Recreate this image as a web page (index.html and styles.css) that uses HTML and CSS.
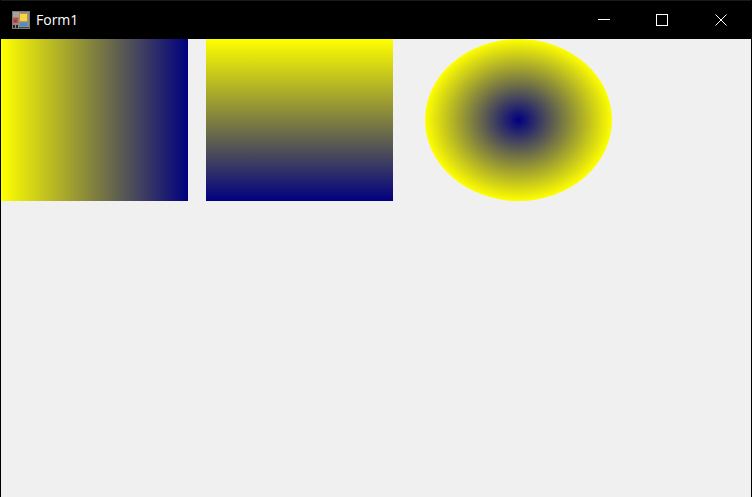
FILE: index.html
```html
<!DOCTYPE html>
<html lang="en">
<head>
<meta charset="utf-8">
<title>Form1</title>
<link rel="stylesheet" href="styles.css">
</head>
<body>
<div class="window">
  <header class="titlebar">
    <svg class="app-icon" width="18" height="18" viewBox="0 0 18 18" aria-hidden="true">
      <rect x="0" y="0" width="18" height="18" fill="#7a7a7a"/>
      <rect x="1" y="1" width="16" height="16" fill="#8f8b86"/>
      <rect x="1" y="1" width="6" height="5" fill="#a8a29a"/>
      <rect x="7" y="2" width="9" height="9" fill="#a89a5c"/>
      <rect x="8" y="3" width="7" height="7" fill="#fbd243"/>
      <rect x="1" y="7" width="5" height="5" fill="#c9493f"/>
      <rect x="2.500" y="9" width="2" height="2" fill="#8a3a34"/>
      <rect x="8" y="12" width="7" height="3" fill="#3f8fdc"/>
      <rect x="1" y="14" width="2" height="3" fill="#222"/>
      <rect x="4" y="14" width="2" height="3" fill="#222"/>
      <rect x="7" y="16" width="10" height="1" fill="#444"/>
    </svg>
    <span class="title">Form1</span>
    <div class="controls">
      <div class="control">
        <svg width="12" height="12" viewBox="0 0 12 12" aria-hidden="true"><path d="M0 5.500H12" stroke="#fff" fill="none"/></svg>
      </div>
      <div class="control">
        <svg width="12" height="12" viewBox="0 0 12 12" aria-hidden="true"><rect x="0.500" y="0.500" width="11" height="11" stroke="#fff" fill="none"/></svg>
      </div>
      <div class="control">
        <svg width="12" height="12" viewBox="0 0 12 12" aria-hidden="true"><path d="M0.500 0.500L11.500 11.500M11.500 0.500L0.500 11.500" stroke="#fff" fill="none"/></svg>
      </div>
    </div>
  </header>
  <main class="client">
    <div class="shape linear-h"></div>
    <div class="shape linear-v"></div>
    <div class="shape radial"></div>
  </main>
</div>
</body>
</html>
```
FILE: styles.css
```css
html, body {
  margin: 0;
  padding: 0;
  height: 100%;
  overflow: hidden;
}

.window {
  box-sizing: border-box;
  width: 752px;
  height: 497px;
  display: flex;
  flex-direction: column;
  background: #000;
  padding: 0 1px;
}

.titlebar {
  box-sizing: border-box;
  height: 39px;
  flex: none;
  display: flex;
  align-items: center;
  padding: 0 1px 1px 11px;
  border-top: 1px solid #1a1a1a;
  color: #fff;
  font-family: "Open Sans", "Noto Sans", sans-serif;
  font-size: 14px;
}

.app-icon {
  flex: none;
  margin-right: 6px;
}

.title {
  flex: 1;
}

.controls {
  display: flex;
  align-self: stretch;
}

.control {
  width: 58.5px;
  display: flex;
  align-items: center;
  justify-content: center;
}

.client {
  flex: 1;
  display: flex;
  align-items: flex-start;
  background: #f0f0f0;
}

.shape {
  width: 187px;
  height: 162px;
  flex: none;
}

.linear-h {
  background: linear-gradient(to right, #ffff00, #000080);
}

.linear-v {
  margin-left: 18px;
  background: linear-gradient(to bottom, #ffff00, #000080);
}

.radial {
  margin-left: 32px;
  border-radius: 50%;
  background: radial-gradient(closest-side, #000080, #ffff00);
}
```
